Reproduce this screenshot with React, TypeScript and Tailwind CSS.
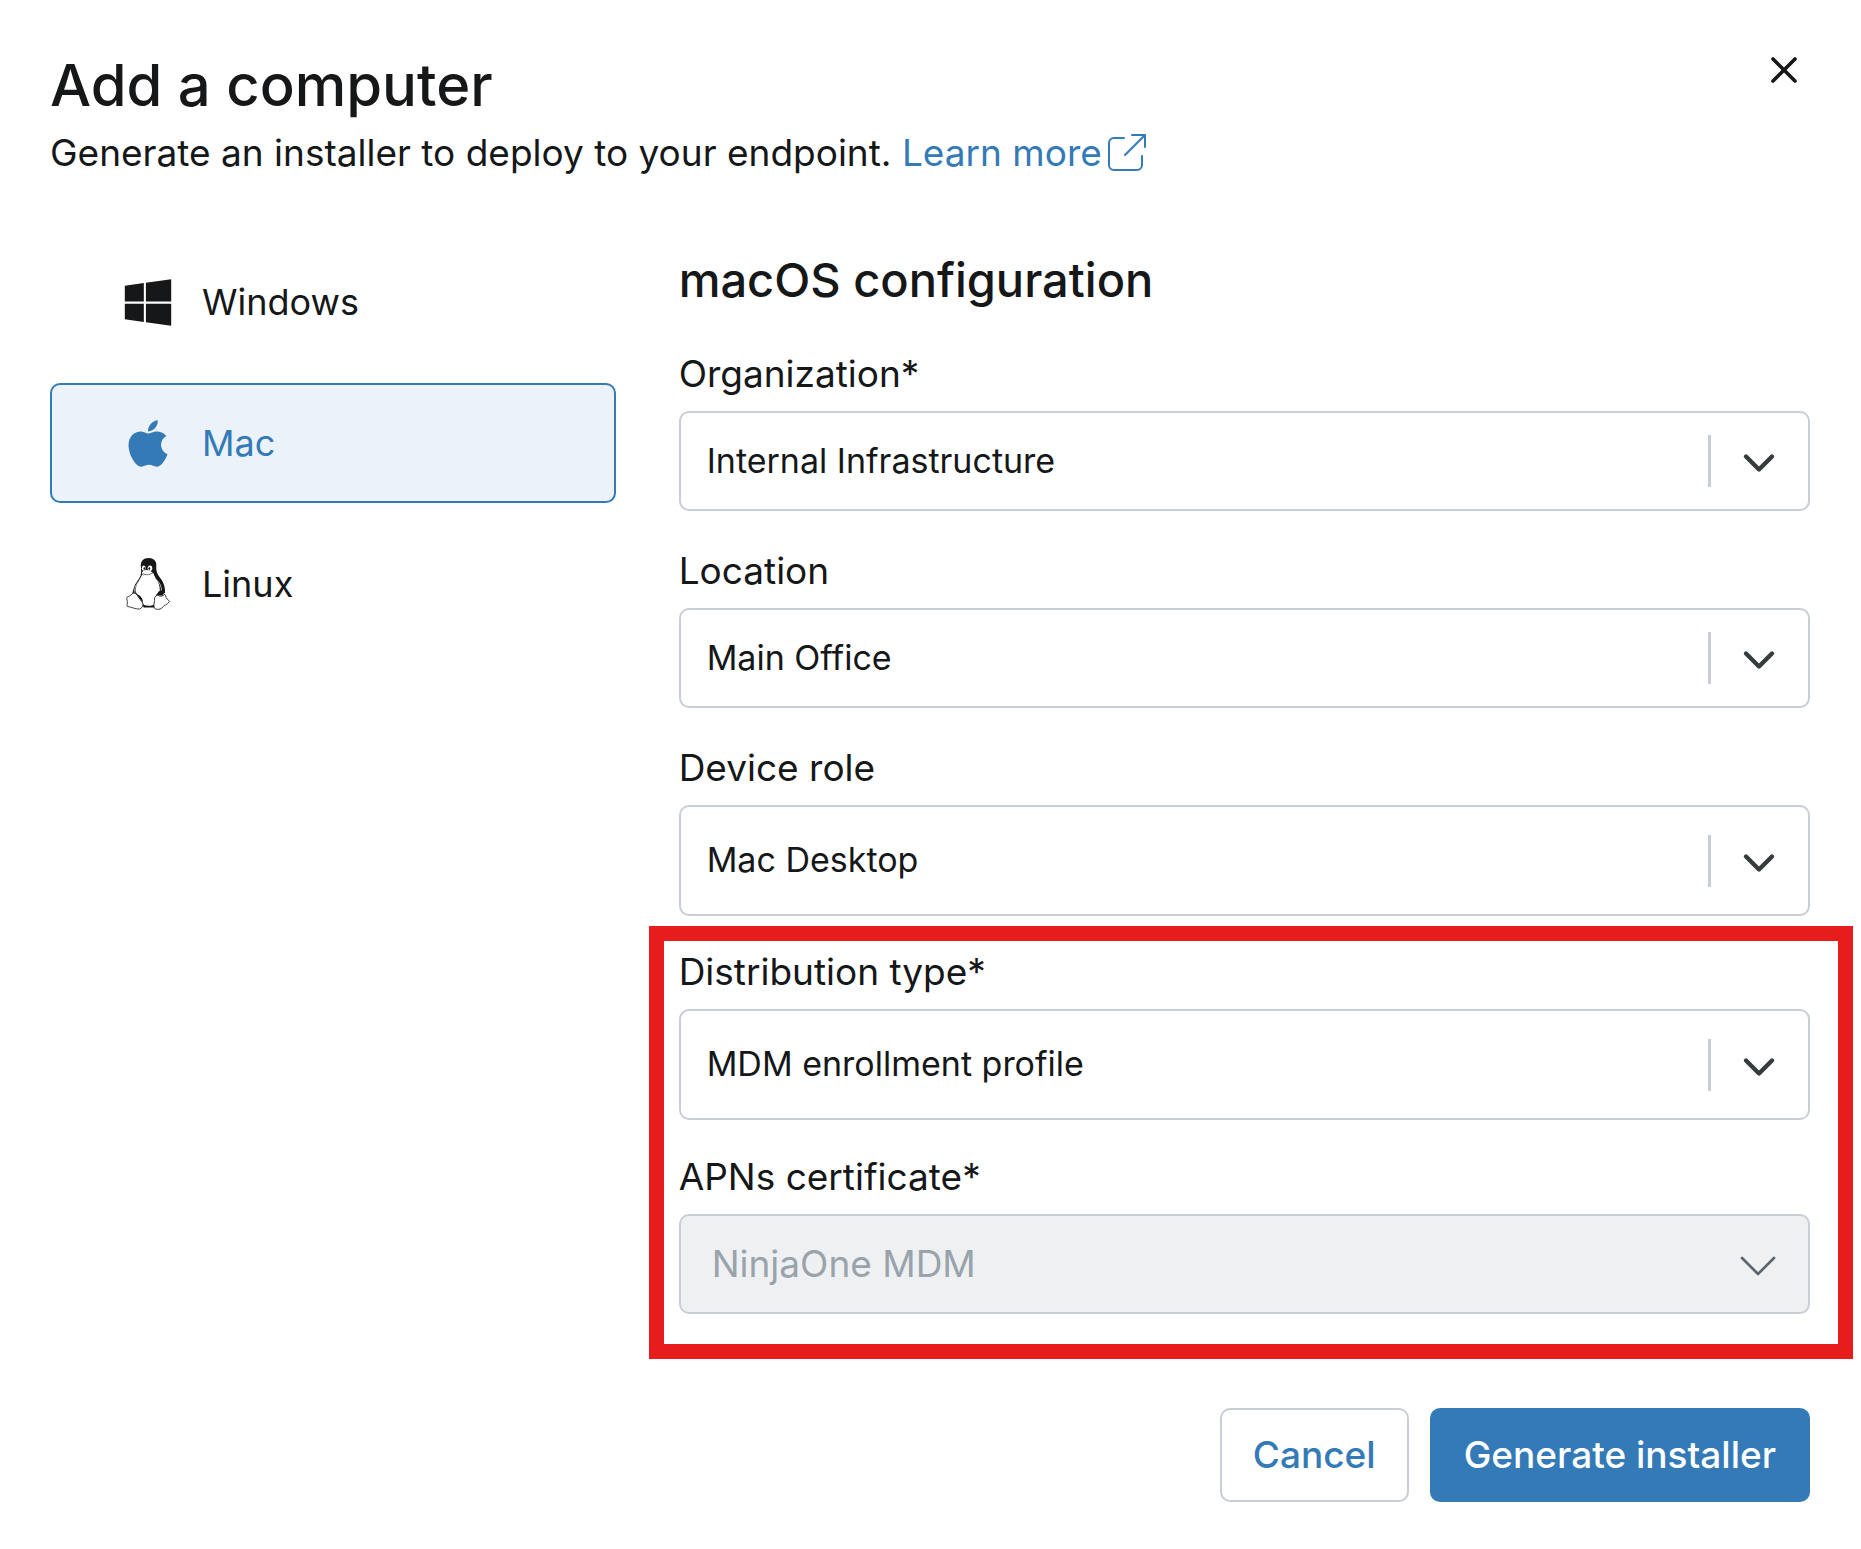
import clsx from 'clsx';
import { ChevronDown, X } from 'lucide-react';
import { ComponentType, useState } from 'react';
import { FaApple, FaWindows } from 'react-icons/fa';

type IconProps = { className?: string };

const TuxIcon = ({ className }: IconProps) => (
  <svg viewBox="46 50 136 162" className={className} aria-hidden="true">
    {/* Body */}
    <path
      d="M116 50c-16 0-24 9-24 24 1 14 2 22-1 30-5 12-17 24-20 36-2 6-3 12-6 20l18 8 18 33h34l8-36 23-8c1-15-3-27-9-38-6-10-15-18-17-30-2-10 1-20-2-27-4-8-12-12-22-12z"
      fill="#151718"
    />
    {/* Belly */}
    <path
      d="M96 101c-5 12-16 25-19 39-2 8-1 15 4 21 6 6 14 9 15 17 1 6 2 12 5 15 10 5 24 4 32-1 2-8 3-19 5-27 3-6 9-10 12-14 1-18-6-30-13-40-3-5-5-10-7-15-8 8-25 11-34 5z"
      fill="#fff"
    />
    <path d="M84 124c-7 9-13 19-10 34M142 118c8 9 14 20 13 32" fill="none" stroke="#fff" strokeWidth="2" />
    {/* Face */}
    <ellipse cx="101" cy="81" rx="6" ry="8" fill="#fff" />
    <ellipse cx="120" cy="81" rx="7" ry="8" fill="#fff" />
    <ellipse cx="103" cy="82" rx="3" ry="4" fill="#151718" />
    <ellipse cx="118" cy="82" rx="3" ry="4" fill="#151718" />
    <path
      d="M95 95c3-5 9-8 15-8 7 0 15 4 18 8 0 6-9 11-17 11-7 0-14-3-16-11z"
      fill="#fff"
    />
    <path d="M98 97c8 6 20 5 28-1" fill="none" stroke="#151718" strokeWidth="2" />
    {/* Feet */}
    <path d="M80 161c7 1 16 10 18 20l-4 4z" fill="#151718" />
    <path
      d="M50 170c5-4 12-4 17-12 5-2 10 0 14 6 5 9 13 16 17 24 2 8-2 15-10 18-12 1-24-6-37-8-3-3 1-9 0-15-1-5-3-10-1-13z"
      fill="#fff"
      stroke="#151718"
      strokeWidth="2.5"
    />
    <path
      d="M134 172c2-6 7-8 10-8 8 5 16 3 21-3 4 2 2 9 7 14 3 3 8 5 7 9-6 8-16 11-23 19-6 5-17 6-23 0-3-10 2-20 1-31z"
      fill="#fff"
      stroke="#151718"
      strokeWidth="2.5"
    />
    <ellipse cx="153" cy="158" rx="9" ry="7" fill="#151718" />
  </svg>
);

const ExternalLinkIcon = ({ className }: IconProps) => (
  <svg
    viewBox="0 0 38 38"
    className={className}
    fill="none"
    stroke="currentColor"
    strokeWidth="2"
    strokeLinecap="round"
    strokeLinejoin="round"
    aria-hidden="true"
  >
    <path d="M16 4H6a5 5 0 0 0-5 5v22a5 5 0 0 0 5 5h23a5 5 0 0 0 5-5v-9" />
    <path d="M24 1h13v12M36 2 17 21" />
  </svg>
);

type Platform = 'windows' | 'mac' | 'linux';

const platforms: {
  id: Platform;
  name: string;
  icon: ComponentType<IconProps>;
}[] = [
  { id: 'windows', name: 'Windows', icon: FaWindows },
  { id: 'mac', name: 'Mac', icon: FaApple },
  { id: 'linux', name: 'Linux', icon: TuxIcon },
];

type SelectFieldProps = {
  id: string;
  label: string;
  options: string[];
  tall?: boolean;
  disabled?: boolean;
};

const SelectField = ({
  id,
  label,
  options,
  tall = false,
  disabled = false,
}: SelectFieldProps) => (
  <div>
    <label htmlFor={id} className="block text-[37px] leading-[44px]">
      {label}
    </label>
    <div className="relative mt-[15px]">
      <select
        id={id}
        disabled={disabled}
        className={clsx(
          'block w-full appearance-none rounded-[10px] border-2 border-[#c9ced6] pr-[110px] outline-none',
          tall ? 'h-[111px]' : 'h-[100px]',
          disabled
            ? 'bg-[#eff0f2] pl-[31px] text-[37px] text-[#98a3ab] opacity-100'
            : 'bg-white pb-[2px] pl-[26px] text-[34px]'
        )}
      >
        {options.map((option) => (
          <option key={option}>{option}</option>
        ))}
      </select>
      <div className="pointer-events-none absolute inset-y-0 right-0 flex items-center">
        {disabled ? (
          <ChevronDown
            className="mt-1 mr-5 size-16 text-[#5b656b]"
            strokeWidth={1}
          />
        ) : (
          <>
            <span className="h-[52px] w-[3px] bg-[#c9ced6]" />
            <ChevronDown
              className="mt-1 mr-[25px] ml-[22px] size-[52px] text-[#363b3e]"
              strokeWidth={2}
            />
          </>
        )}
      </div>
    </div>
  </div>
);

const App = () => {
  const [platform, setPlatform] = useState<Platform>('mac');

  return (
    <main className="bg-white pt-[50px] pr-[51px] pb-[47px] pl-[50px] font-['Inter',sans-serif] text-[#151718] [font-optical-sizing:none]">
      <header className="flex items-start justify-between">
        <div>
          <h1 className="text-[58px] leading-[70px] font-medium">
            Add a computer
          </h1>
          <p className="mt-[6px] text-[37px] leading-[54px]">
            Generate an installer to deploy to your endpoint.{' '}
            <a
              href="#"
              className="inline-flex items-center gap-[6px] text-[#337ab7]"
            >
              Learn more
              <ExternalLinkIcon className="size-[38px]" />
            </a>
          </p>
        </div>
        <button type="button" aria-label="Close" className="-mt-[2px] mr-1">
          <X className="size-11" strokeWidth={2} />
        </button>
      </header>

      <div className="mt-[62px] grid grid-cols-[1fr_2fr] gap-[63px]">
        {/* Platform picker */}
        <nav className="flex flex-col gap-[21px]">
          {platforms.map(({ id, name, icon: Icon }) => (
            <button
              key={id}
              type="button"
              onClick={() => setPlatform(id)}
              className={clsx(
                'flex h-[120px] items-center gap-7 rounded-[10px] border-2 pl-[70px] text-[36px]',
                platform === id
                  ? 'border-[#337ab7] bg-[#ebf2f9] text-[#337ab7]'
                  : 'border-transparent'
              )}
            >
              <Icon className="h-[53px] w-[52px]" />
              {name}
            </button>
          ))}
        </nav>

        <form className="pt-2" onSubmit={(e) => e.preventDefault()}>
          <h2 className="mb-[42px] text-[47px] leading-[60px] font-medium">
            macOS configuration
          </h2>

          <div className="flex flex-col gap-[38px]">
            <SelectField
              id="organization"
              label="Organization*"
              options={['Internal Infrastructure']}
            />
            <SelectField
              id="location"
              label="Location"
              options={['Main Office']}
            />
            <SelectField
              id="role"
              label="Device role"
              options={['Mac Desktop']}
              tall
            />
          </div>

          <div className="relative mt-[34px] flex flex-col gap-[35px]">
            <SelectField
              id="distribution"
              label="Distribution type*"
              options={['MDM enrollment profile']}
              tall
            />
            <SelectField
              id="certificate"
              label="APNs certificate*"
              options={['NinjaOne MDM']}
              disabled
            />
            {/* Highlight frame */}
            <div className="pointer-events-none absolute -top-6 -right-[43px] -bottom-[45px] -left-[30px] border-[15px] border-[#e71d1d]" />
          </div>

          <div className="mt-[94px] flex justify-end gap-[21px]">
            <button
              type="button"
              className="h-[94px] rounded-[10px] border-2 border-[#c9ced6] px-[31px] text-[37px] font-medium text-[#337ab7]"
            >
              Cancel
            </button>
            <button
              type="submit"
              className="h-[94px] rounded-[10px] bg-[#337ab7] px-[34px] text-[37px] font-medium text-white"
            >
              Generate installer
            </button>
          </div>
        </form>
      </div>
    </main>
  );
};

export default App;
